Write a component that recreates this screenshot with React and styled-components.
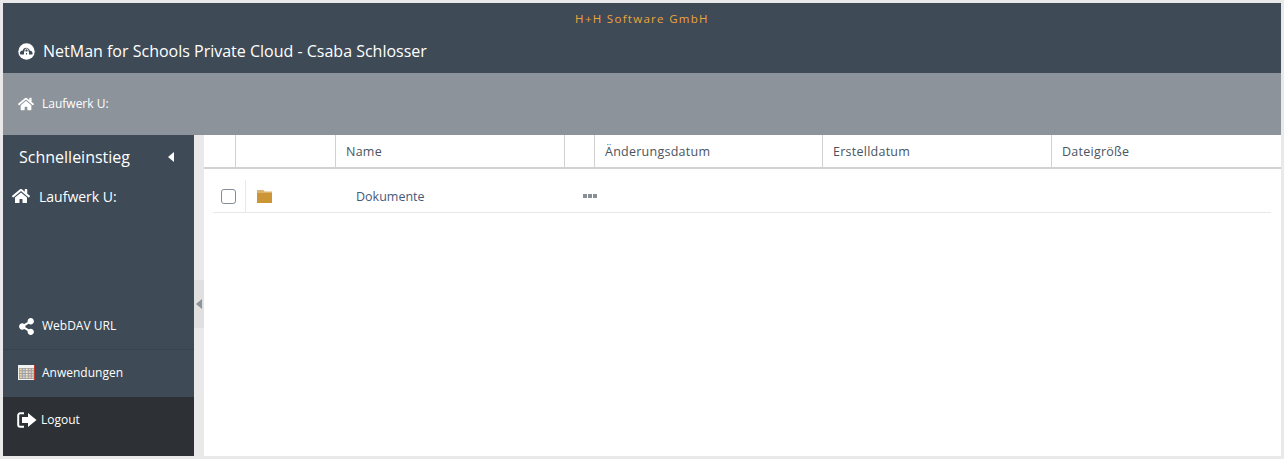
import React from "react";
import styled, { createGlobalStyle } from "styled-components";
import { FaHome, FaShareAlt } from "react-icons/fa";

const Global = createGlobalStyle`
  html, body { margin: 0; padding: 0; height: 100%; background: #e9e9e9; }
  body { font-family: "Open Sans", sans-serif; overflow: hidden; }
  #root { height: 100%; }
`;
const Page = styled.div`
  width: 1284px; height: 459px; box-sizing: border-box;
  padding: 3px; display: flex; flex-direction: column;
`;
const TopBar = styled.header`
  height: 70px; flex: none; background: #3e4a56; display: flex; flex-direction: column;
`;
const Company = styled.div`
  height: 31px; padding-top: 9px; box-sizing: border-box; text-align: center;
  color: #eda53a; font-size: 11.5px; line-height: 14px; letter-spacing: 1.3px; font-weight: 400;
`;
const Brand = styled.div`
  display: flex; align-items: center; padding-left: 15px; gap: 7px; height: 34px;
`;
const BrandTitle = styled.h1`
  margin: 0; font-size: 16px; font-weight: 400; color: #fff; line-height: 34px; padding-left: 1px;
`;
const Crumbs = styled.nav`
  height: 62px; flex: none; background: #8c939b; display: flex; align-items: center;
  padding: 0 0 1px 15px; box-sizing: border-box; gap: 8px; color: #fff; font-size: 12px; font-weight: 400;
`;
const Body = styled.div`
  flex: 1; min-height: 0; display: flex;
`;
const Sidebar = styled.aside`
  width: 191px; flex: none; background: #3e4a56; display: flex; flex-direction: column;
`;
const SideHead = styled.div`
  height: 44px; display: flex; align-items: center; justify-content: space-between;
  padding: 0 20px 0 16px; color: #fff; font-size: 16px;
`;
const Caret = styled.span`
  display: block; width: 0; height: 0; border-style: solid;
  border-width: ${p => p.$h / 2}px ${p => p.$w}px ${p => p.$h / 2}px 0;
  border-color: transparent ${p => p.$color} transparent transparent;
`;
const SideLink = styled.div`
  display: flex; align-items: center; gap: 9px; padding: 0 0 2px 9px; height: 36px; box-sizing: border-box;
  color: #fff; font-size: 14px; font-weight: 400;
`;
const Spacer = styled.div` flex: 1; `;
const MenuItem = styled.div`
  height: ${p => p.$h}px; flex: none; box-sizing: border-box; display: flex; align-items: ${p => p.$top ? "flex-start" : "center"};
  gap: ${p => p.$gap}px; padding-left: ${p => p.$pl}px; padding-top: ${p => p.$top || 0}px; padding-bottom: ${p => p.$pb || 0}px; color: #fff; font-size: 12px;
  background: ${p => p.$dark ? "#2d3135" : "transparent"};
  border-bottom: ${p => p.$line ? "1px solid #374350" : "none"};
  & > span { line-height: 16px; }
`;
const Gutter = styled.div`
  width: 10px; flex: none; display: flex; align-items: center;
`;
const Collapse = styled.div`
  width: 10px; height: 48px; background: #e0e0e0; display: flex; align-items: center; justify-content: center;
  margin-top: 17px;
`;
const Main = styled.main`
  flex: 1; min-width: 0; background: #fff;
`;
const HeadRow = styled.div`
  height: 34px; box-sizing: border-box; display: grid; grid-template-columns: 32px 100px 229px 30px 228px 229px 1fr;
  border-bottom: 2px solid #d2d2d2;
`;
const HeadCell = styled.div`
  border-right: ${p => p.$last ? "none" : "1px solid #d2d2d2"}; padding-left: 10px; font-size: 12.5px; color: #4a5460; line-height: 33px;
  letter-spacing: 0.02em;
`;
const Row = styled.div`
  margin: 11px 10px 0 9px; height: 33px; box-sizing: border-box; display: flex; align-items: stretch;
  border-bottom: 1px solid #e8e8e8;
`;
const CheckCell = styled.div`
  width: 33px; flex: none; box-sizing: border-box; border-right: 1px solid #e8e8e8; display: flex; align-items: center; padding-left: 8px;
`;
const Check = styled.span`
  display: block; width: 15px; height: 15px; box-sizing: border-box; border: 1.5px solid #838c98; border-radius: 3px; background: #fff;
`;
const IconCell = styled.div`
  width: 100px; flex: none; display: flex; align-items: center; padding-left: 11px; box-sizing: border-box;
`;
const FileName = styled.div`
  width: 227px; flex: none; padding-left: 10px; font-size: 12.5px; line-height: 34px; color: #46597a; letter-spacing: 0;
`;
const Dots = styled.div`
  display: flex; gap: 1px; align-items: center; & > i { display: block; width: 4px; height: 4px; background: #8a8f96; }
`;

const CloudLogo = () => (
  <svg width="17" height="17" viewBox="0 0 17 17">
    <circle cx="8.5" cy="8.5" r="8.2" fill="#fff" />
    <path d="M2.400 11.500c-1.200-1.800.2-4 2.200-3.700.6-2 2.200-3.300 4.300-2.900 1.500.3 2.600 1.300 3 2.900 1.800-.3 3.300 1.800 2.500 3.700z" fill="#3e4a56" />
    <rect x="6" y="8.500" width="5" height="4.500" fill="#fff" />
    <path d="M7 8.800V7.400a1.500 1.500 0 0 1 3 0v1.400" fill="none" stroke="#fff" strokeWidth="1" />
    <rect x="8" y="10" width="1" height="1.500" fill="#3e4a56" />
  </svg>
);
const Calendar = () => (
  <svg width="17" height="15" viewBox="0 0 17 15">
    <rect x="0" y="0" width="17" height="15" fill="#f2f2f2" />
    <rect x="16" y="0" width="1" height="15" fill="#c0392b" />
    <rect x="1" y="3" width="15" height="11" fill="#9a968c" />
    {[0, 1, 2, 3].map(r => [0, 1, 2, 3, 4].map(c => (
      <rect key={r + "-" + c} x={1.6 + c * 3} y={3.6 + r * 2.6} width="2.200" height="1.800" fill={["#f0d9a8", "#c3d3ea", "#f2e7c8", "#e6c6d8", "#c6e2cc"][c]} />
    )))}
  </svg>
);
const LogoutIcon = () => (
  <svg width="20" height="16" viewBox="0 0 20 16">
    <path d="M7 1.300H3.200a2 2 0 0 0-2 2v9.400a2 2 0 0 0 2 2H7" fill="none" stroke="#fff" strokeWidth="2" />
    <path d="M5 5h6V1l8.500 7-8.500 7v-4H5z" fill="#fff" />
  </svg>
);
const Folder = () => (
  <svg width="15" height="13" viewBox="0 0 15 13">
    <path d="M0 0h6.500l1 1.500H15V3H0z" fill="#dcb36c" />
    <rect x="0" y="3" width="15" height="10" fill="#cc9535" />
  </svg>
);

export default function App() {
  return (
    <Page>
      <Global />
      <TopBar>
        <Company>H+H Software GmbH</Company>
        <Brand><CloudLogo /><BrandTitle>NetMan for Schools Private Cloud - Csaba Schlosser</BrandTitle></Brand>
      </TopBar>
      <Crumbs><FaHome size={16} /><span>Laufwerk U:</span></Crumbs>
      <Body>
        <Sidebar>
          <SideHead><span>Schnelleinstieg</span><Caret $w={6} $h={11} $color="#fff" /></SideHead>
          <SideLink><FaHome size={18} /><span>Laufwerk U:</span></SideLink>
          <Spacer />
          <MenuItem $h={47} $gap={7} $pl={15} $line><FaShareAlt size={17} /><span>WebDAV URL</span></MenuItem>
          <MenuItem $h={47} $gap={7} $pl={15} $pb={2}><Calendar /><span>Anwendungen</span></MenuItem>
          <MenuItem $h={59} $gap={4} $pl={14} $top={15} $dark><LogoutIcon /><span>Logout</span></MenuItem>
        </Sidebar>
        <Gutter><Collapse><Caret $w={6} $h={11} $color="#8c939b" /></Collapse></Gutter>
        <Main>
          <HeadRow>
            <HeadCell /><HeadCell /><HeadCell>Name</HeadCell><HeadCell />
            <HeadCell>Änderungsdatum</HeadCell><HeadCell>Erstelldatum</HeadCell><HeadCell $last>Dateigröße</HeadCell>
          </HeadRow>
          <Row>
            <CheckCell><Check /></CheckCell>
            <IconCell><Folder /></IconCell>
            <FileName>Dokumente</FileName>
            <Dots><i /><i /><i /></Dots>
          </Row>
        </Main>
      </Body>
    </Page>
  );
}
